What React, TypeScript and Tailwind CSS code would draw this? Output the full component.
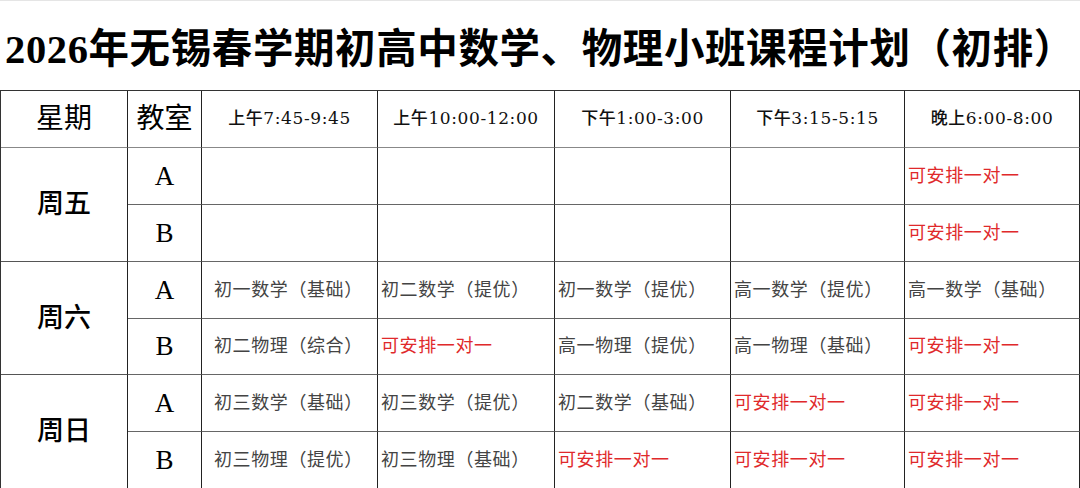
const RED = '可安排一对一'

type Row = { day?: string; room: string; cells: string[] }

const ROWS: Row[] = [
  { day: '周五', room: 'A', cells: ['', '', '', '', RED] },
  { room: 'B', cells: ['', '', '', '', RED] },
  { day: '周六', room: 'A', cells: ['初一数学（基础）', '初二数学（提优）', '初一数学（提优）', '高一数学（提优）', '高一数学（基础）'] },
  { room: 'B', cells: ['初二物理（综合）', RED, '高一物理（提优）', '高一物理（基础）', RED] },
  { day: '周日', room: 'A', cells: ['初三数学（基础）', '初三数学（提优）', '初二数学（基础）', RED, RED] },
  { room: 'B', cells: ['初三物理（提优）', '初三物理（基础）', RED, RED, RED] },
]

const TIMES = ['上午7:45-9:45', '上午10:00-12:00', '下午1:00-3:00', '下午3:15-5:15', '晚上6:00-8:00']

const serif = { fontFamily: '"Liberation Serif", "Noto Sans CJK SC", serif' }
const timeFont = { fontFamily: '"DejaVu Serif", "Noto Sans CJK SC", serif' }

export default function App() {
  return (
    <div className="w-[1080px] h-[488px] overflow-hidden bg-white text-black" style={serif}>
      <div className="h-[90px] flex items-center justify-center pt-[10px] border-t border-[#e5e5e5]">
        <h1 className="text-[40.5px] font-bold whitespace-nowrap leading-none tracking-[0.6px]">
          2026年无锡春学期初高中数学、物理小班课程计划（初排）
        </h1>
      </div>

      <div className="grid grid-cols-[127px_74px_176px_177px_176px_174px_175px] grid-rows-[57px_57px_57px_57px_56px_57px_57px] border-t border-l border-t-[#333] border-l-[#333]">
        <div className="flex items-center justify-center border-r border-b border-r-[#222] border-b-[#888] text-[28px]">星期</div>
        <div className="flex items-center justify-center border-r border-b border-r-[#222] border-b-[#888] text-[28px]">教室</div>
        {TIMES.map(t => (
          <div
            key={t}
            style={timeFont}
            className="flex items-center justify-center border-r border-b border-r-[#222] border-b-[#888] text-[17px] font-medium tracking-[0.6px] text-[#111]"
          >
            {t}
          </div>
        ))}

        {ROWS.map((row, i) => (
          <>
            {row.day && (
              <div key={`d${i}`} className="row-span-2 flex items-center justify-center border-r border-b border-r-[#222] border-b-[#555] text-[27px] font-medium">
                {row.day}
              </div>
            )}
            <div key={`r${i}`} className="flex items-center justify-center border-r border-b border-r-[#222] border-b-[#666] text-[27px]">
              {row.room}
            </div>
            {row.cells.map((c, j) => (
              <div
                key={`c${i}-${j}`}
                className={`flex items-center border-r border-b border-r-[#222] border-b-[#666] text-[18px] tracking-[0.6px] whitespace-nowrap ${
                  j === 0 ? 'pl-[12px]' : 'pl-[3px]'
                } ${c === RED ? 'text-[#e0292b]' : 'text-[#444]'}`}
              >
                {c}
              </div>
            ))}
          </>
        ))}
      </div>
    </div>
  )
}
